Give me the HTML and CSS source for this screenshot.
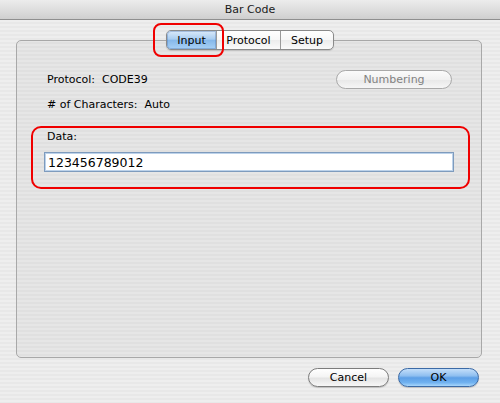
FILE: index.html
```html
<!DOCTYPE html>
<html>
<head>
<meta charset="utf-8">
<link rel="stylesheet" href="styles.css">
</head>
<body>
<div class="window">
  <div class="titlebar">Bar Code</div>
  <div class="content">
    <div class="tabs-row">
      <div class="tabs">
        <div class="tab tab-input selected">Input</div>
        <div class="tab tab-protocol">Protocol</div>
        <div class="tab tab-setup">Setup</div>
        <div class="highlight-tab"></div>
      </div>
    </div>
    <div class="panel">
      <div class="row row-protocol">
        <span class="label">Protocol:&nbsp; CODE39</span>
        <button class="pill pill-disabled numbering">Numbering</button>
      </div>
      <div class="row row-chars">
        <span class="label"># of Characters:&nbsp; Auto</span>
      </div>
      <div class="data-group">
        <div class="data-label">Data:</div>
        <input class="data-input" type="text" value="123456789012">
      </div>
    </div>
    <div class="buttons">
      <button class="pill cancel">Cancel</button>
      <button class="pill pill-default ok">OK</button>
    </div>
  </div>
</div>
</body>
</html>
```
FILE: styles.css
```css
html, body {
  margin: 0;
  padding: 0;
}
body {
  font-family: "DejaVu Sans", "Lucida Grande", sans-serif;
  font-size: 11px;
  color: #000;
}
.window {
  width: 500px;
  height: 403px;
  overflow: hidden;
  background: repeating-linear-gradient(to bottom, #eeeeee 0, #eeeeee 2px, #e8e8e8 2px, #e8e8e8 4px);
}
.titlebar {
  height: 19px;
  line-height: 20px;
  text-align: center;
  font-size: 11px;
  color: #1a1a1a;
  border-bottom: 1px solid #8f8f8f;
  background: linear-gradient(to bottom, #ececec 0%, #dedede 50%, #cfcfcf 100%);
}
.content {
  padding: 10px 18px 0 16px;
}
.tabs-row {
  display: flex;
  justify-content: center;
  position: relative;
  z-index: 2;
  padding-left: 2px;
}
.tabs {
  position: relative;
  display: flex;
  height: 20px;
  box-sizing: border-box;
  border: 1px solid #8a8a8a;
  border-radius: 5px;
  background: linear-gradient(to bottom, #ffffff 0%, #f7f7f7 50%, #ececec 51%, #fafafa 100%);
  box-shadow: 0 1px 1px rgba(0,0,0,0.15);
}
.tab {
  display: flex;
  align-items: center;
  justify-content: center;
  color: #000;
  box-sizing: border-box;
  height: 18px;
}
.tab + .tab {
  border-left: 1px solid #9a9a9a;
}
.tab-input { width: 49px; }
.tab-protocol { width: 64px; }
.tab-setup { width: 53px; }
.tab.selected {
  border-radius: 4px 0 0 4px;
  background: linear-gradient(to bottom, #dbeafa 0%, #a9cdf1 45%, #86b8ea 52%, #a8d1f6 100%);
  box-shadow: inset 0 0 0 1px rgba(70,110,170,0.35);
}
.highlight-tab {
  position: absolute;
  left: -14px;
  top: -8px;
  width: 71px;
  height: 34px;
  box-sizing: border-box;
  border: 2px solid #f00000;
  border-radius: 8px;
  pointer-events: none;
}
.panel {
  margin-top: -10px;
  height: 318px;
  box-sizing: border-box;
  border: 1px solid #a8a8a8;
  border-radius: 5px;
  background: rgba(0, 0, 0, 0.03);
  padding-top: 29px;
}
.row {
  display: flex;
  align-items: center;
  justify-content: space-between;
  padding: 0 29px 0 30px;
}
.row-protocol {
  height: 19px;
}
.row-chars {
  margin-top: 8px;
  height: 14px;
}
.label {
  white-space: pre;
}
.pill {
  font-family: "DejaVu Sans", "Lucida Grande", sans-serif;
  font-size: 11px;
  height: 19px;
  box-sizing: border-box;
  border-radius: 10px;
  padding: 0;
  margin: 0;
  border: 1px solid #7c7c7c;
  color: #000;
  background: linear-gradient(to bottom, #ffffff 0%, #f4f4f4 45%, #e4e4e4 55%, #f7f7f7 100%);
  box-shadow: 0 1px 1px rgba(0,0,0,0.18);
}
.pill-disabled {
  color: #828282;
  border-color: #a9a9a9;
  background: linear-gradient(to bottom, #fbfbfb 0%, #f1f1f1 50%, #e8e8e8 51%, #f6f6f6 100%);
  box-shadow: none;
}
.numbering {
  width: 116px;
}
.data-group {
  margin: 15px 11px 0 14px;
  height: 63px;
  box-sizing: border-box;
  border: 2px solid #f00000;
  border-radius: 10px;
  padding: 2px 14px 0 11px;
}
.data-label {
  height: 14px;
  line-height: 14px;
  margin-left: 3px;
}
.data-input {
  display: block;
  margin-top: 8px;
  width: 100%;
  height: 20px;
  box-sizing: border-box;
  border: 1px solid #7e9bbd;
  box-shadow: inset 0 0 0 1px #bcd2ea;
  background: #fff;
  padding: 0 0 0 3px;
  font-family: "DejaVu Sans", "Lucida Grande", sans-serif;
  font-size: 12.5px;
  color: #000;
  outline: none;
}
.buttons {
  display: flex;
  justify-content: flex-end;
  gap: 9px;
  margin-top: 10px;
  margin-right: 3px;
}
.cancel, .ok {
  width: 81px;
}
.pill-default {
  border-color: #3b6aa6;
  background: linear-gradient(to bottom, #c3defa 0%, #8fbff0 40%, #5d9fe6 52%, #71b2f0 80%, #a8d6fb 100%);
}
```
